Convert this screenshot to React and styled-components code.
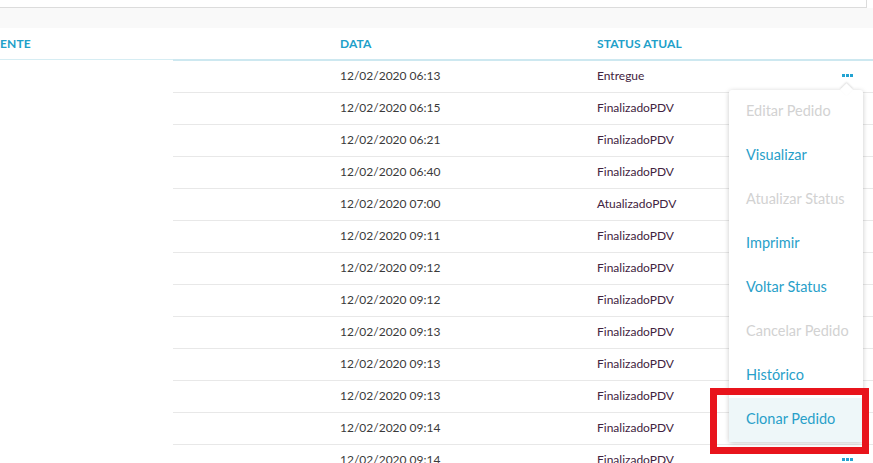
import React from 'react';
import styled, { createGlobalStyle } from 'styled-components';

const GlobalStyle = createGlobalStyle`
  html, body {
    margin: 0;
    padding: 0;
    background: #fff;
    font-family: Lato, "Open Sans", sans-serif;
    overflow: hidden;
  }
`;

const Page = styled.div`
  position: relative;
  width: 873px;
  height: 463px;
  overflow: hidden;
`;

const SearchBox = styled.div`
  width: 866px;
  height: 7px;
  border-right: 1px solid #dcdcdc;
  border-bottom: 1px solid #dcdcdc;
`;

const Band = styled.div`
  height: 20px;
  background: #f9f9f9;
`;

const HeaderWrap = styled.div`
  display: flex;
  flex-direction: column;
`;

const HeaderRow = styled.div`
  display: flex;
  height: 31px;
  align-items: center;
`;

const HeaderLine = styled.div`
  display: flex;
  height: 2px;
`;

const LineLeft = styled.div`
  width: 173px;
  border-top: 1px solid #d6edf3;
`;

const LineRight = styled.div`
  flex: 1;
  background: #cde8f0;
`;

const HeadCell = styled.div`
  width: ${p => p.w}px;
  overflow: hidden;
  white-space: nowrap;
  font-size: 12px;
  font-weight: 700;
  color: #21a0c9;
  letter-spacing: 0.1px;
`;

const Clipped = styled.span`
  display: inline-block;
  margin-left: ${p => p.shift}px;
`;

const Row = styled.div`
  display: flex;
  height: 32px;
`;

const Blank = styled.div`
  width: 173px;
`;

const RowMain = styled.div`
  flex: 1;
  display: flex;
  align-items: center;
  border-bottom: 1px solid #e8e8e8;
  font-size: 12px;
  padding-bottom: 2px;
  box-sizing: border-box;
`;

const DateCell = styled.div`
  width: 257px;
  padding-left: 167px;
  color: #3a3a3a;
`;

const StatusCell = styled.div`
  width: 245px;
  color: #3f2340;
`;

const Dots = styled.div`
  display: flex;
  gap: 1px;
  span {
    width: 3px;
    height: 3px;
    background: #22a3d2;
  }
`;

const Menu = styled.div`
  position: absolute;
  left: 729px;
  top: 90px;
  width: 134px;
  background: #fff;
  border-radius: 3px;
  box-shadow: 0 1px 5px rgba(0, 0, 0, 0.22);
`;

const Arrow = styled.div`
  position: absolute;
  top: -5px;
  right: 12px;
  width: 9px;
  height: 9px;
  background: #fff;
  transform: rotate(45deg);
  box-shadow: -1px -1px 2px rgba(0, 0, 0, 0.12);
`;

const Item = styled.div`
  position: relative;
  height: 44px;
  box-sizing: border-box;
  display: flex;
  align-items: center;
  padding: 0 0 4px 17px;
  font-size: 14.5px;
  color: ${p => (p.disabled ? '#d2d2d2' : '#28a0c9')};
  background: ${p => (p.active ? '#eef7f9' : 'transparent')};
  white-space: nowrap;
`;

const Highlight = styled.div`
  position: absolute;
  left: 710px;
  top: 388px;
  width: 145px;
  height: 52px;
  border: 7px solid #e8141c;
`;

const rows = [
  ['12/02/2020 06:13', 'Entregue'],
  ['12/02/2020 06:15', 'FinalizadoPDV'],
  ['12/02/2020 06:21', 'FinalizadoPDV'],
  ['12/02/2020 06:40', 'FinalizadoPDV'],
  ['12/02/2020 07:00', 'AtualizadoPDV'],
  ['12/02/2020 09:11', 'FinalizadoPDV'],
  ['12/02/2020 09:12', 'FinalizadoPDV'],
  ['12/02/2020 09:12', 'FinalizadoPDV'],
  ['12/02/2020 09:13', 'FinalizadoPDV'],
  ['12/02/2020 09:13', 'FinalizadoPDV'],
  ['12/02/2020 09:13', 'FinalizadoPDV'],
  ['12/02/2020 09:14', 'FinalizadoPDV'],
  ['12/02/2020 09:14', 'FinalizadoPDV'],
];

const actions = [
  { label: 'Editar Pedido', disabled: true },
  { label: 'Visualizar' },
  { label: 'Atualizar Status', disabled: true },
  { label: 'Imprimir' },
  { label: 'Voltar Status' },
  { label: 'Cancelar Pedido', disabled: true },
  { label: 'Histórico' },
  { label: 'Clonar Pedido', active: true },
];

export default function App() {
  return (
    <Page>
      <GlobalStyle />
      <SearchBox />
      <Band />
      <HeaderWrap>
        <HeaderRow>
          <HeadCell w={340}>
            <Clipped shift={-18}>CLIENTE</Clipped>
          </HeadCell>
          <HeadCell w={257}>DATA</HeadCell>
          <HeadCell w={200}>STATUS ATUAL</HeadCell>
        </HeaderRow>
        <HeaderLine>
          <LineLeft />
          <LineRight />
        </HeaderLine>
      </HeaderWrap>
      {rows.map((r, i) => (
        <Row key={i}>
          <Blank />
          <RowMain>
            <DateCell>{r[0]}</DateCell>
            <StatusCell>{r[1]}</StatusCell>
            <Dots>
              <span />
              <span />
              <span />
            </Dots>
          </RowMain>
        </Row>
      ))}
      <Menu>
        <Arrow />
        {actions.map(a => (
          <Item key={a.label} disabled={a.disabled} active={a.active}>
            {a.label}
          </Item>
        ))}
      </Menu>
      <Highlight />
    </Page>
  );
}
